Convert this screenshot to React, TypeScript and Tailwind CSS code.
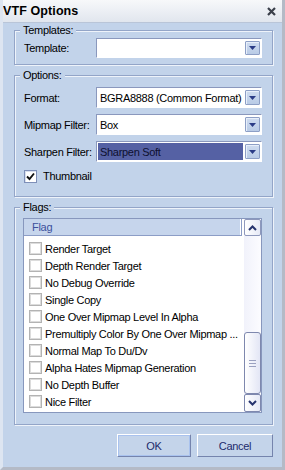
import React from "react";

const flags = [
  "Render Target",
  "Depth Render Target",
  "No Debug Override",
  "Single Copy",
  "One Over Mipmap Level In Alpha",
  "Premultiply Color By One Over Mipmap ...",
  "Normal Map To Du/Dv",
  "Alpha Hates Mipmap Generation",
  "No Depth Buffer",
  "Nice Filter",
];

function DropBtn() {
  return (
    <div className="w-[15px] shrink-0 self-stretch my-[1px] flex items-center justify-center bg-gradient-to-b from-[#cfdcf0] to-[#b9cbe6] border border-[#8d9fc6] rounded-[1px] shadow-[inset_1px_1px_0_#e8effa]">
      <svg width="7" height="4" viewBox="0 0 7 4">
        <path d="M0 0H7L3.5 4Z" fill="#2b3c86" />
      </svg>
    </div>
  );
}

function Combo({ value, selected, short }: { value: string; selected?: boolean; short?: boolean }) {
  return (
    <div
      className={
        (short ? "h-[20px] " : "h-[21px] ") +
        "w-[166px] shrink-0 flex items-stretch bg-white border border-t-[#8a98bd] border-l-[#8a98bd] border-b-white border-r-white p-[1px] gap-[2px]"
      }
    >
      <div
        className={
          selected
            ? "flex-1 flex items-center pl-[2px] bg-[#5561a4] text-[#0e1030] whitespace-nowrap overflow-hidden"
            : "flex-1 flex items-center pl-[2px] whitespace-nowrap overflow-hidden"
        }
      >
        {value}
      </div>
      <DropBtn />
    </div>
  );
}

function Group({
  title,
  children,
  className,
}: {
  title: string;
  children: React.ReactNode;
  className?: string;
}) {
  return (
    <fieldset
      className={
        "border border-[#93a5c8] shadow-[inset_1px_1px_0_#eef3fa,1px_1px_0_#eef3fa] " +
        (className ?? "")
      }
    >
      <legend className="ml-[5px] px-[3px] leading-[14px] bg-[#c2d3ea] text-black">
        {title}
      </legend>
      {children}
    </fieldset>
  );
}

function Row({ label, children }: { label: string; children: React.ReactNode }) {
  return (
    <div className="flex items-center justify-between pl-[9px] pr-[10px]">
      <span className="whitespace-nowrap">{label}</span>
      {children}
    </div>
  );
}

export default function App() {
  return (
    <div className="w-[285px] h-[470px] flex flex-col bg-[#c2d3ea] border-l-[3px] border-l-[#dde5f1] border-r-[3px] border-r-[#b4bac6] border-b-[3px] border-b-[#b4bac6] text-[11px] tracking-[-0.3px] leading-[14px] text-black font-['Liberation_Sans',Arial,sans-serif] overflow-hidden">
      {/* Title bar */}
      <div className="h-[23px] shrink-0 -ml-[3px] -mr-[3px] flex items-center justify-between pl-[3px] pr-[9px] bg-gradient-to-b from-[#f7f8fa] to-[#e1e6ee] border-b border-[#b9c5d8]">
        <span className="font-bold text-[12.5px] tracking-[0.1px]">VTF Options</span>
        <svg width="9" height="9" viewBox="0 0 9 9">
          <path d="M1 1L8 8M8 1L1 8" stroke="#3a3f4a" strokeWidth="2.2" />
        </svg>
      </div>

      {/* Body */}
      <div className="flex-1 flex flex-col pl-[11px] pr-[9px]">
        <Group title="Templates:" className="pb-[6px]">
          <div className="pt-[1px]">
            <Row label="Template:">
              <Combo value="" short />
            </Row>
          </div>
        </Group>

        <Group title="Options:" className="mt-[3px] pb-[13px]">
          <div className="pt-[5px] flex flex-col gap-[6px]">
            <Row label="Format:">
              <Combo value="BGRA8888 (Common Format)" />
            </Row>
            <Row label="Mipmap Filter:">
              <Combo value="Box" />
            </Row>
            <Row label="Sharpen Filter:">
              <Combo value="Sharpen Soft" selected />
            </Row>
            <div className="flex items-center gap-[6px] pl-[9px] mt-[1px]">
              <div className="w-[13px] h-[13px] bg-white border border-[#7e8fb8] shadow-[inset_1px_1px_0_#d9e0ee] flex items-center justify-center">
                <svg width="9" height="9" viewBox="0 0 9 9">
                  <path d="M1 4.5L3.5 7L8 1.5" stroke="#111" strokeWidth="1.9" fill="none" />
                </svg>
              </div>
              <span>Thumbnail</span>
            </div>
          </div>
        </Group>

        <Group title="Flags:" className="mt-[3px] pb-[11px]">
          <div className="pt-[4px] pl-[8px] pr-[10px]">
            <div className="h-[195px] flex bg-white border border-[#8797bd]">
              <div className="flex-1 flex flex-col min-w-0">
                <div className="h-[17px] shrink-0 flex items-center pl-[8px] bg-[#c6d5ec] text-[#3c509c] border-b border-[#8c9dc6] border-r border-r-[#8c9dc6] mr-[2px] shadow-[inset_-1px_0_0_#ffffff]">
                  Flag
                </div>
                <div className="pt-[4px] flex flex-col">
                  {flags.map((f) => (
                    <div key={f} className="h-[17px] flex items-center pl-[5px] gap-[3px] whitespace-nowrap overflow-hidden">
                      <div className="w-[13px] h-[13px] shrink-0 border border-[#b3b3b3] shadow-[inset_1px_1px_0_#dcdcdc,inset_-1px_-1px_0_#dcdcdc] bg-white" />
                      <span>{f}</span>
                    </div>
                  ))}
                </div>
              </div>
              {/* Scrollbar */}
              <div className="w-[17px] shrink-0 flex flex-col bg-gradient-to-r from-[#f1f2fb] to-[#fcfcff]">
                <div className="h-[17px] flex items-center justify-center border border-[#8e98bc] rounded-[2px] bg-gradient-to-r from-[#ffffff] to-[#e6e9f6]">
                  <svg width="9" height="6" viewBox="0 0 9 6">
                    <path d="M1 5L4.5 1.5L8 5" stroke="#26336e" strokeWidth="2" fill="none" />
                  </svg>
                </div>
                <div className="flex-1 flex flex-col justify-end">
                  <div className="h-[62px] flex flex-col items-center justify-center gap-[2px] border border-[#7e88ae] rounded-[3px] bg-gradient-to-r from-[#ffffff] to-[#e3e6f5]">
                    <div className="w-[7px] h-[1px] bg-[#9aa1c0]" />
                    <div className="w-[7px] h-[1px] bg-[#9aa1c0]" />
                    <div className="w-[7px] h-[1px] bg-[#9aa1c0]" />
                  </div>
                </div>
                <div className="h-[18px] flex items-center justify-center border border-[#7e88ae] rounded-[2px] bg-gradient-to-r from-[#ffffff] to-[#e6e9f6]">
                  <svg width="9" height="6" viewBox="0 0 9 6">
                    <path d="M1 1L4.5 4.5L8 1" stroke="#26336e" strokeWidth="2" fill="none" />
                  </svg>
                </div>
              </div>
            </div>
          </div>
        </Group>

        <div className="mt-[9px] flex justify-end gap-[6px]">
          <button className="w-[74px] h-[23px] flex items-center justify-center bg-[#c4d4ea] text-[#1d2b6c] border border-t-[#ffffff] border-l-[#ffffff] border-r-[#7584ad] border-b-[#7584ad] shadow-[inset_0_0_0_1px_#a9c2ee]">
            OK
          </button>
          <button className="w-[76px] h-[23px] flex items-center justify-center bg-[#c4d4ea] text-[#1d2b6c] border border-t-[#ffffff] border-l-[#ffffff] border-r-[#7584ad] border-b-[#7584ad]">
            Cancel
          </button>
        </div>
      </div>
    </div>
  );
}
